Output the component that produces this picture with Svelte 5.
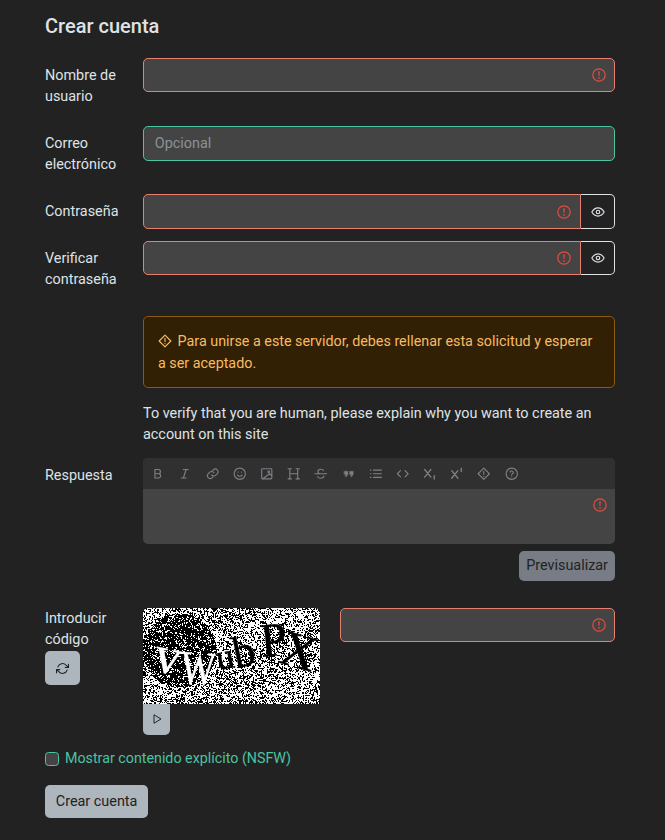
<script lang="ts">
  import { onMount } from 'svelte';

  let noise: HTMLCanvasElement;

  const toolbar = ['bold', 'italic', 'link', 'smile', 'image', 'header', 'strike', 'quote', 'list', 'code', 'sub', 'sup', 'spoiler', 'help'];

  // seeded so every run gives the same captcha speckle
  function rng(seed: number) {
    return () => {
      seed = (seed + 0x6d2b79f5) | 0;
      let t = Math.imul(seed ^ (seed >>> 15), 1 | seed);
      t = (t + Math.imul(t ^ (t >>> 7), 61 | t)) ^ t;
      return ((t ^ (t >>> 14)) >>> 0) / 4294967296;
    };
  }

  onMount(() => {
    const ctx = noise.getContext('2d');
    if (!ctx) return;
    const rand = rng(7);
    const w = 177;
    const h = 96;
    const cells = new Uint8Array(w * h);
    for (let y = 0; y < h; y++) {
      for (let x = 0; x < w; x++) {
        const inBlob = Math.hypot(x - 36, y - 42) < 37;
        const sweep = Math.sin(x * 0.05 + y * 0.09);
        let white = inBlob ? 0.22 : 0.6 + sweep * 0.06;
        // clumps: some pixels copy a neighbour so the speckle is not uniform
        let on = rand() < white;
        if (x > 0 && y > 0 && rand() < 0.15) {
          on = (rand() < 0.5 ? cells[y * w + x - 1] : cells[(y - 1) * w + x]) === 1;
        }
        cells[y * w + x] = on ? 1 : 0;
      }
    }
    const img = ctx.createImageData(w, h);
    cells.forEach((c, i) => {
      const v = c ? 255 : 0;
      img.data[i * 4] = v;
      img.data[i * 4 + 1] = v;
      img.data[i * 4 + 2] = v;
      img.data[i * 4 + 3] = 255;
    });
    ctx.putImageData(img, 0, 0);
  });
</script>

{#snippet errorIcon()}
  <svg class="invalid-icon" viewBox="0 0 12 12" fill="none" stroke="#e74c3c" aria-hidden="true">
    <circle cx="6" cy="6" r="5.300" stroke-width="1" />
    <path d="M5.500 3 5.750 6.700h.5L6.500 3z" fill="#e74c3c" stroke-width="0.3" stroke-linejoin="round" />
    <circle cx="6" cy="8.500" r="0.700" fill="#e74c3c" stroke="none" />
  </svg>
{/snippet}

{#snippet eye()}
  <svg class="eye" viewBox="0 0 24 24" fill="none" stroke="currentColor" stroke-width="2" aria-hidden="true">
    <path d="M1.500 12S5.500 5 12 5s10.500 7 10.500 7-4 7-10.500 7S1.500 12 1.500 12z" />
    <circle cx="12" cy="12" r="3" />
  </svg>
{/snippet}

{#snippet diamond(cls)}
  <svg class={cls} viewBox="0 0 24 24" fill="none" stroke="currentColor" stroke-width="2" stroke-linejoin="round" stroke-linecap="round" aria-hidden="true">
    <path d="M12 2 22 12 12 22 2 12z" />
    <path d="M12 7.500v5.500M12 16.500v.2" />
  </svg>
{/snippet}

{#snippet tool(name)}
  <svg class="tool-icon" viewBox="0 0 24 24" fill="none" stroke="currentColor" stroke-width="2" stroke-linecap="round" stroke-linejoin="round" aria-hidden="true">
    {#if name === 'bold'}
      <path d="M7 4.500h6a3.700 3.700 0 0 1 0 7.500H7zM7 12h7a3.800 3.800 0 0 1 0 7.500H7z" />
    {:else if name === 'italic'}
      <path d="M9.500 4.500H18M6 19.500h8.500M14.500 4.500l-5 15" />
    {:else if name === 'link'}
      <path d="M10 14a5 5 0 0 0 7.500.5l3-3a5 5 0 0 0-7-7l-1.700 1.700" />
      <path d="M14 10a5 5 0 0 0-7.500-.5l-3 3a5 5 0 0 0 7 7l1.700-1.700" />
    {:else if name === 'smile'}
      <circle cx="12" cy="12" r="10" />
      <path d="M8 14.500s1.500 2 4 2 4-2 4-2M9 9h.01M15 9h.01" />
    {:else if name === 'image'}
      <rect x="3" y="3" width="18" height="18" rx="1.500" />
      <circle cx="15.500" cy="8.500" r="1.500" />
      <path d="M21 15.500 17 12 5 21" />
    {:else if name === 'header'}
      <path d="M5 3v18M19 3v18M5 12h14M2 3h6M16 3h6M2 21h6M16 21h6" />
    {:else if name === 'strike'}
      <path d="M1.500 12h21M17 6.500C16.500 4.800 14.500 4 12 4 9 4 7 5.500 7 7.800c0 1.700 1 3 2.500 4.200M17.500 16.200c0 2.300-2.500 3.800-5.500 3.800-2.800 0-5-1-5.500-3" />
    {:else if name === 'quote'}
      <path d="M4 7.500h6.500v5.500L8 17H5.500l1.800-3.500H4zM13.500 7.500H20v5.500L17.500 17H15l1.800-3.500h-3.300z" fill="currentColor" stroke-width="0.6" />
    {:else if name === 'list'}
      <path d="M8 5.500h14M8 12h14M8 18.500h14M2.500 5.500h1M2.500 12h1M2.500 18.500h1" />
    {:else if name === 'code'}
      <path d="M8 6.500 2.500 12 8 17.500M16 6.500l5.500 5.500-5.500 5.500" />
    {:else if name === 'sub'}
      <path d="M3 4.500 14 18M14 4.500 3 18M20 15.500v6" stroke-width="2.400" />
    {:else if name === 'sup'}
      <path d="M3 6.500 14 20M14 6.500 3 20M20 2v6" stroke-width="2.400" />
    {:else if name === 'spoiler'}
      <path d="M12 2 22 12 12 22 2 12z" />
      <path d="M12 7.500v5.500M12 16.500v.2" />
    {:else}
      <circle cx="12" cy="12" r="10" />
      <path d="M9 9a3 3 0 0 1 5.800 1c0 2-3 2.500-3 4M12 17.500h.01" />
    {/if}
  </svg>
{/snippet}

<div class="page">
  <h1 class="title">Crear cuenta</h1>

  <div class="row">
    <label class="label" for="username">Nombre de usuario</label>
    <div class="field invalid">
      <input id="username" type="text" />
      {@render errorIcon()}
    </div>
  </div>

  <div class="row">
    <label class="label" for="email">Correo electrónico</label>
    <div class="field valid">
      <input id="email" type="email" placeholder="Opcional" />
    </div>
  </div>

  <div class="row">
    <label class="label" for="password">Contraseña</label>
    <div class="group">
      <div class="field invalid joined">
        <input id="password" type="password" />
        {@render errorIcon()}
      </div>
      <button class="eye-btn" type="button">{@render eye()}</button>
    </div>
  </div>

  <div class="row">
    <label class="label" for="verify">Verificar contraseña</label>
    <div class="group">
      <div class="field invalid joined">
        <input id="verify" type="password" />
        {@render errorIcon()}
      </div>
      <button class="eye-btn" type="button">{@render eye()}</button>
    </div>
  </div>

  <div class="notice-block">
    <div class="alert">
      {@render diamond('alert-icon')}
      Para unirse a este servidor, debes rellenar esta solicitud y esperar a ser aceptado.
    </div>
    <p class="question">To verify that you are human, please explain why you want to create an account on this site</p>
  </div>

  <div class="row answer">
    <label class="label" for="answer">Respuesta</label>
    <div>
      <div class="editor">
        <div class="toolbar">
          {#each toolbar as name (name)}
            <button class="tool" type="button" aria-label={name}>{@render tool(name)}</button>
          {/each}
        </div>
        <div class="editor-body">
          <textarea id="answer"></textarea>
          {@render errorIcon()}
        </div>
      </div>
      <div class="preview-row">
        <button class="btn preview" type="button">Previsualizar</button>
      </div>
    </div>
  </div>

  <div class="row captcha">
    <div>
      <label class="label captcha-label" for="code">Introducir código</label>
      <button class="btn refresh" type="button" aria-label="refresh">
        <svg class="btn-icon" viewBox="0 0 24 24" fill="none" stroke="currentColor" stroke-width="2" stroke-linecap="round" stroke-linejoin="round" aria-hidden="true">
          <path d="M23 4v6h-6M1 20v-6h6" />
          <path d="M3.500 9a9 9 0 0 1 14.900-3.400L23 10M1 14l4.600 4.400A9 9 0 0 0 20.500 15" />
        </svg>
      </button>
    </div>
    <div class="captcha-main">
      <div class="captcha-col">
        <div class="captcha-img">
          <canvas bind:this={noise} width="177" height="96"></canvas>
          <svg class="captcha-text" viewBox="0 0 177 96" aria-label="captcha">
            <text x="9" y="62" font-size="52" transform="rotate(12 9 62)" fill="#fff" stroke="#fff">v</text>
            <text font-size="38" transform="translate(37 75) rotate(4) scale(0.95 1.25)" fill="#fff" stroke="#fff">W</text>
            <text x="75" y="62" font-size="36" transform="rotate(-10 75 62)">u</text>
            <text x="93" y="60" font-size="44" transform="rotate(-12 93 60)">b</text>
            <text x="119" y="49" font-size="48" transform="rotate(-6 119 49)">P</text>
            <text x="134" y="54" font-size="50" transform="rotate(16 134 54)">X</text>
          </svg>
        </div>
        <button class="btn play" type="button" aria-label="play">
          <svg viewBox="0 0 24 24" fill="none" stroke="currentColor" stroke-width="2" stroke-linejoin="round" aria-hidden="true">
            <path d="M6 3.500 20 12 6 20.500z" />
          </svg>
        </button>
      </div>
      <div class="field invalid code">
        <input id="code" type="text" />
        {@render errorIcon()}
      </div>
    </div>
  </div>

  <label class="check">
    <input type="checkbox" />
    <span>Mostrar contenido explícito (NSFW)</span>
  </label>

  <button class="btn submit" type="button">Crear cuenta</button>
</div>

<style>
  :global(body) {
    background: #222;
    color: #dee2e6;
    font-family: Roboto, "Liberation Sans", sans-serif;
    font-size: 14.400px;
    line-height: 21.600px;
  }

  .page {
    padding: 14px 50px 22px 45px;
  }

  .title {
    margin: 0 0 20px;
    font-size: 20px;
    font-weight: 500;
    line-height: 24px;
  }

  .row {
    display: grid;
    grid-template-columns: 98px 1fr;
    margin-bottom: 12.200px;
  }

  .label {
    display: block;
    padding: 6.700px 12px 6.100px 0;
  }

  .field {
    position: relative;
    height: 34.400px;
    box-sizing: border-box;
    border: 1px solid;
    border-radius: 5px;
    background: #444;
  }

  .field input {
    display: block;
    width: 100%;
    height: 100%;
    box-sizing: border-box;
    padding: 0 10.800px;
    border: 0;
    outline: 0;
    background: none;
    color: #dee2e6;
    font: inherit;
  }

  .field input::placeholder {
    color: #8c9196;
    opacity: 1;
  }

  .invalid {
    border-color: #e8806f;
  }

  .valid {
    border-color: #4cc3a2;
  }

  .invalid-icon {
    position: absolute;
    top: 50%;
    right: 8px;
    width: 14px;
    height: 14px;
    transform: translateY(-50%);
  }

  .group {
    display: flex;
  }

  .joined {
    flex: 1;
    border-radius: 5px 0 0 5px;
  }

  .joined .invalid-icon {
    right: 9px;
  }

  .eye-btn {
    display: flex;
    align-items: center;
    justify-content: center;
    width: 34px;
    height: 34.400px;
    padding: 0;
    border: 1px solid #dee2e6;
    border-left: 0;
    border-radius: 0 5px 5px 0;
    background: #222;
    color: #dee2e6;
  }

  .eye {
    width: 14px;
    height: 14px;
  }

  .notice-block {
    margin: 19px 0 0 98px;
  }

  .alert {
    padding: 14.400px 14px 12.400px;
    border: 1px solid #8a5a0d;
    border-radius: 5px;
    background: #312003;
    color: #f7bb66;
    font-size: 14.330px;
  }

  .alert-icon {
    width: 14px;
    height: 14px;
    margin-right: 2px;
    vertical-align: -2px;
  }

  .question {
    margin: 15px 0 11.800px;
  }

  .answer {
    margin-bottom: 27px;
  }

  .editor {
    overflow: hidden;
    border-radius: 5px;
    background: #444;
  }

  .toolbar {
    display: flex;
    height: 31px;
    box-sizing: border-box;
    align-items: center;
    padding: 1px 0 0 1.400px;
    background: #303030;
  }

  .tool {
    display: flex;
    align-items: center;
    justify-content: center;
    width: 27.200px;
    padding: 0;
    border: 0;
    background: none;
    color: #7d8084;
  }

  .tool-icon {
    width: 13.500px;
    height: 13.500px;
  }

  .editor-body {
    position: relative;
    height: 55px;
  }

  .editor-body textarea {
    display: block;
    width: 100%;
    height: 100%;
    border: 0;
    outline: 0;
    resize: none;
    background: none;
  }

  .editor-body .invalid-icon {
    top: 16px;
    right: 8px;
  }

  .preview-row {
    display: flex;
    justify-content: flex-end;
    margin-top: 7px;
  }

  .btn {
    border: 0;
    border-radius: 5px;
    background: #adb5bd;
    color: #222;
    font: inherit;
  }

  .preview {
    height: 30px;
    padding: 0 7px;
    background: #777c85;
  }

  .captcha {
    margin-bottom: 13px;
  }

  .captcha-label {
    padding: 0 10px 0 0;
  }

  .refresh {
    display: flex;
    align-items: center;
    justify-content: center;
    width: 35px;
    height: 34px;
    padding: 0;
  }

  .btn-icon {
    width: 13px;
    height: 13px;
  }

  .captcha-main {
    display: grid;
    grid-template-columns: 177px 1fr;
    gap: 20px;
    align-items: start;
  }

  .captcha-img {
    position: relative;
    height: 96px;
  }

  .captcha-img canvas {
    display: block;
    border-radius: 5px 5px 0 0;
  }

  .captcha-text {
    position: absolute;
    inset: 0;
    overflow: visible;
    font-family: "Liberation Serif", serif;
    fill: #000;
    stroke: #000;
    stroke-width: 0.4px;
  }

  .play {
    display: flex;
    align-items: center;
    justify-content: center;
    width: 27px;
    height: 31px;
    padding: 0;
    border-radius: 0 0 5px 5px;
  }

  .play svg {
    width: 12px;
    height: 12px;
  }

  .check {
    display: flex;
    align-items: center;
    gap: 6px;
    margin-bottom: 16px;
    color: #4cc3a2;
    font-size: 14.270px;
  }

  .check input {
    width: 14px;
    height: 14px;
    margin: 0;
    appearance: none;
    border: 1.400px solid #4cc3a2;
    border-radius: 3.500px;
    background: #444;
  }

  .submit {
    display: block;
    height: 33px;
    padding: 0 10.800px;
  }
</style>
